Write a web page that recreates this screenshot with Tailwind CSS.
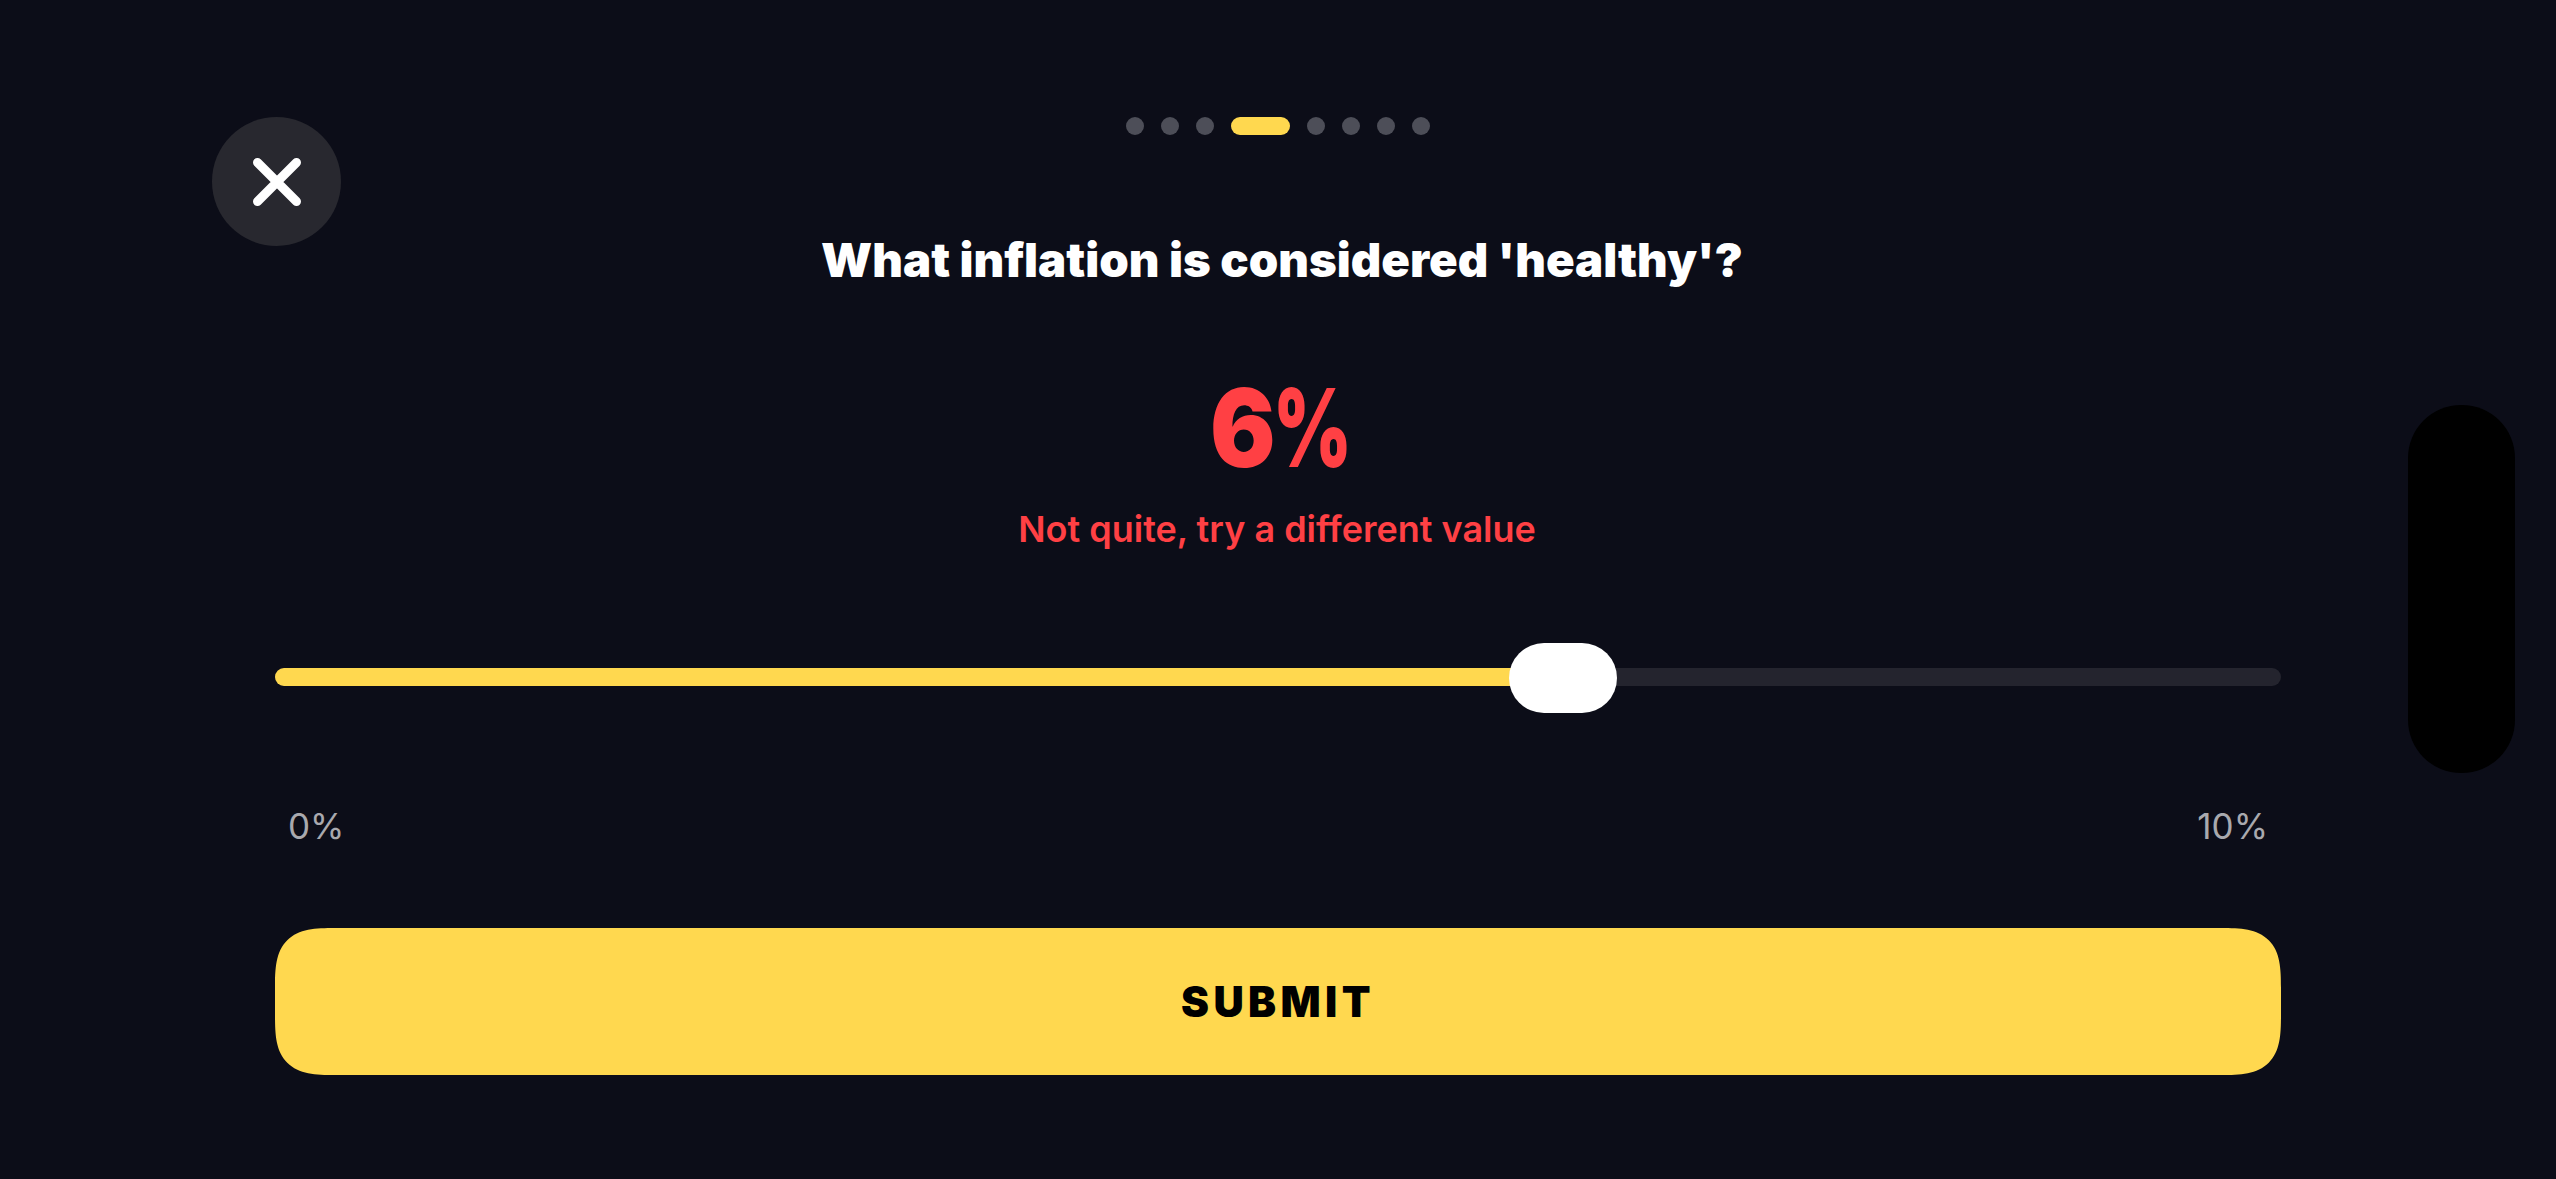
<!doctype html>
<html>
<head>
    <meta charset="UTF-8">
    <script src="https://cdn.jsdelivr.net/npm/@tailwindcss/browser@4"></script>
</head>
<body class="bg-[#0c0d18]">
    <div class="relative w-[2556px] h-[1179px] overflow-hidden bg-[#0c0d18] font-['Inter',sans-serif]">

        <!-- close -->
        <button class="absolute left-[212px] top-[117px] w-[129px] h-[129px] rounded-full bg-[#28282f] flex items-center justify-center">
            <svg width="48" height="48" viewBox="0 0 48 48" fill="none" stroke="white" stroke-width="9" stroke-linecap="round">
                <path d="M4.5 4.5L43.5 43.5M43.5 4.5L4.5 43.5"/>
            </svg>
        </button>

        <!-- notch -->
        <div class="absolute left-[2408px] top-[405px] w-[107px] h-[368px] rounded-[53px] bg-black"></div>

        <div class="flex flex-col items-center px-[275px] pt-[117px]">
            <!-- progress dots -->
            <div class="flex items-center gap-[17.5px] h-[18px]">
                <span class="w-[17.6px] h-[17.6px] rounded-full bg-[#4d4e58]"></span>
                <span class="w-[17.6px] h-[17.6px] rounded-full bg-[#4d4e58]"></span>
                <span class="w-[17.6px] h-[17.6px] rounded-full bg-[#4d4e58]"></span>
                <span class="w-[58.5px] h-[17.6px] rounded-full bg-[#ffd84f]"></span>
                <span class="w-[17.6px] h-[17.6px] rounded-full bg-[#4d4e58]"></span>
                <span class="w-[17.6px] h-[17.6px] rounded-full bg-[#4d4e58]"></span>
                <span class="w-[17.6px] h-[17.6px] rounded-full bg-[#4d4e58]"></span>
                <span class="w-[17.6px] h-[17.6px] rounded-full bg-[#4d4e58]"></span>
            </div>

            <h1 class="mt-[97px] ml-[8px] text-[47.3px] leading-[56px] font-black text-white whitespace-nowrap">What inflation is considered 'healthy'?</h1>
            <div class="mt-[80px] w-[136px] flex text-[108px] leading-[120px] font-black text-[#ff4044]">
                <span class="w-[63px] shrink-0 origin-left scale-x-[0.9]">6</span>
                <span class="w-[73px] shrink-0 origin-left scale-x-[0.7]">%</span>
            </div>
            <p class="mt-[21px] mr-[2px] text-[36px] leading-[40px] font-semibold text-[#ff4044] whitespace-nowrap">Not quite, try a different value</p>

            <!-- slider -->
            <div class="relative mt-[119px] w-full h-[18px] rounded-full bg-[#24242e]">
                <div class="h-full w-[1290px] rounded-full bg-[#ffd84f]"></div>
                <div class="absolute left-[1234px] top-[-25px] w-[108px] h-[70px] rounded-[35px] bg-white"></div>
            </div>

            <div class="mt-[120px] w-full flex justify-between px-[13px] text-[35px] leading-[40px] text-[#a9a9ae]">
                <span>0%</span>
                <span>10%</span>
            </div>

            <button class="mt-[82px] w-full h-[147px] rounded-[60px] [corner-shape:superellipse(1.6)] bg-[#ffd84f] text-black text-[42px] font-black tracking-[4.4px]">SUBMIT</button>
        </div>
    </div>
</body>
</html>
